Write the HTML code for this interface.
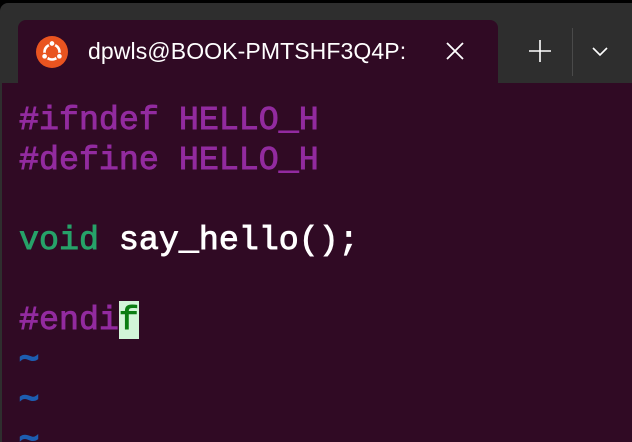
<!DOCTYPE html>
<html><head><style>
html,body{margin:0;width:632px;height:442px;overflow:hidden}
body{background:#000;position:relative;font-family:"Liberation Sans",sans-serif}
.frame{position:absolute;left:0;top:3px;width:632px;height:439px;background:#2e2e2e;border-radius:8px 0 0 0}
.content{position:absolute;left:2px;top:83px;width:630px;height:359px;background:#300a24}
.tab{position:absolute;left:18px;top:20px;width:480px;height:70px;background:#300a24;border-radius:8px 8px 0 0}
.title{position:absolute;left:88px;top:38px;color:#fff;font-size:23px;letter-spacing:0.1px}
pre{position:absolute;left:19px;top:100px;margin:0;font-family:"Liberation Mono",monospace;font-size:33.3px;line-height:40px;color:#fff;-webkit-text-stroke:0.9px currentColor}
.p{color:#922b9f}.g{color:#26a269}.t{color:#1d5db0;-webkit-text-stroke:2px currentColor}
.cur{background:#d2f5d8;color:#0b7d12}
.sep{position:absolute;left:572px;top:28px;width:1px;height:48px;background:#4a4a4a}
</style></head><body>
<div class="frame"></div>
<div class="content"></div>
<div class="tab"></div>
<svg style="position:absolute;left:36px;top:36px" width="32" height="32" viewBox="0 0 32 32">
<circle cx="16" cy="16" r="16" fill="#e95420"/>
<circle cx="16" cy="16" r="7.5" fill="none" stroke="#fff" stroke-width="2.6"/>
<circle cx="16" cy="7.5" r="3" fill="#fff" stroke="#e95420" stroke-width="1.3"/>
<circle cx="8.6" cy="20.3" r="3" fill="#fff" stroke="#e95420" stroke-width="1.3"/>
<circle cx="23.4" cy="20.3" r="3" fill="#fff" stroke="#e95420" stroke-width="1.3"/>
</svg>
<div class="title">dpwls@BOOK-PMTSHF3Q4P:</div>
<svg style="position:absolute;left:446px;top:42px" width="18" height="18"><path d="M1 1L17 17M17 1L1 17" stroke="#fff" stroke-width="1.8"/></svg>
<svg style="position:absolute;left:529px;top:40px" width="22" height="22"><path d="M11 0V22M0 11H22" stroke="#fff" stroke-width="1.6"/></svg>
<div class="sep"></div>
<svg style="position:absolute;left:592px;top:47px" width="16" height="10"><path d="M1 1L8 8L15 1" fill="none" stroke="#fff" stroke-width="1.6"/></svg>
<pre><span class="p">#ifndef HELLO_H</span>
<span class="p">#define HELLO_H</span>

<span class="g">void</span> say_hello();

<span class="p">#endi</span><span class="cur">f</span>
<span class="t">~</span>
<span class="t">~</span>
<span class="t">~</span></pre>
</body></html>
